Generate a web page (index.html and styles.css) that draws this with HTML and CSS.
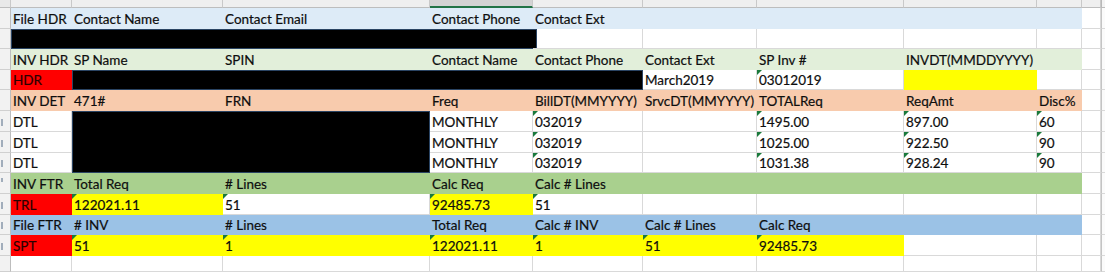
FILE: index.html
```html
<!DOCTYPE html>
<html>
<head>
<meta charset="utf-8">
<link rel="stylesheet" href="styles.css">
</head>
<body>
<div class="sheet">
  <!-- column header strip -->
  <div class="ch corner"></div>
  <div class="ch"></div><div class="ch"></div><div class="ch"></div><div class="ch sel"></div><div class="ch"></div><div class="ch"></div><div class="ch"></div><div class="ch"></div><div class="ch"></div><div class="ch"></div><div class="ch edge"></div>

  <!-- row 9 -->
  <div class="rh"></div>
  <div class="c lb">File HDR</div><div class="c lb">Contact Name</div><div class="c lb">Contact Email</div><div class="c lb">Contact Phone</div><div class="c lb">Contact Ext</div><div class="c lb"></div><div class="c lb"></div><div class="c lb"></div><div class="c lb"></div><div class="c"></div><div class="c edge"></div>

  <!-- row 10 -->
  <div class="rh"></div>
  <div class="c blk span4 wide"></div><div class="c"></div><div class="c"></div><div class="c"></div><div class="c"></div><div class="c"></div><div class="c"></div><div class="c edge"></div>

  <!-- row 11 -->
  <div class="rh"></div>
  <div class="c lg">INV HDR</div><div class="c lg">SP Name</div><div class="c lg">SPIN</div><div class="c lg">Contact Name</div><div class="c lg">Contact Phone</div><div class="c lg">Contact Ext</div><div class="c lg">SP Inv #</div><div class="c lg">INVDT(MMDDYYYY)</div><div class="c lg"></div><div class="c"></div><div class="c edge"></div>

  <!-- row 12 -->
  <div class="rh"></div>
  <div class="c red">HDR</div><div class="c blk span4"></div><div class="c">March2019</div><div class="c tri">03012019</div><div class="c yel"></div><div class="c"></div><div class="c"></div><div class="c edge"></div>

  <!-- row 13 -->
  <div class="rh"></div>
  <div class="c pch">INV DET</div><div class="c pch">471#</div><div class="c pch">FRN</div><div class="c pch">Freq</div><div class="c pch">BillDT(MMYYYY)</div><div class="c pch">SrvcDT(MMYYYY)</div><div class="c pch">TOTALReq</div><div class="c pch">ReqAmt</div><div class="c pch">Disc%</div><div class="c"></div><div class="c edge"></div>

  <!-- row 14 -->
  <div class="rh"><i class="tick"></i></div>
  <div class="c">DTL</div><div class="c blk span2x3"></div><div class="c">MONTHLY</div><div class="c tri">032019</div><div class="c"></div><div class="c tri">1495.00</div><div class="c tri">897.00</div><div class="c tri">60</div><div class="c"></div><div class="c edge"></div>

  <!-- row 15 -->
  <div class="rh"><i class="tick"></i></div>
  <div class="c">DTL</div><div class="c">MONTHLY</div><div class="c tri">032019</div><div class="c"></div><div class="c tri">1025.00</div><div class="c tri">922.50</div><div class="c tri">90</div><div class="c"></div><div class="c edge"></div>

  <!-- row 16 -->
  <div class="rh"><i class="tick"></i></div>
  <div class="c">DTL</div><div class="c">MONTHLY</div><div class="c tri">032019</div><div class="c"></div><div class="c tri">1031.38</div><div class="c tri">928.24</div><div class="c tri">90</div><div class="c"></div><div class="c edge"></div>

  <!-- row 17 -->
  <div class="rh"><i class="tick sm"></i></div>
  <div class="c grn">INV FTR</div><div class="c grn">Total Req</div><div class="c grn"># Lines</div><div class="c grn">Calc Req</div><div class="c grn">Calc # Lines</div><div class="c grn"></div><div class="c grn"></div><div class="c grn"></div><div class="c grn"></div><div class="c"></div><div class="c edge"></div>

  <!-- row 18 -->
  <div class="rh"><i class="tick"></i></div>
  <div class="c red">TRL</div><div class="c yel tri">122021.11</div><div class="c tri">51</div><div class="c yel tri">92485.73</div><div class="c tri">51</div><div class="c"></div><div class="c"></div><div class="c"></div><div class="c"></div><div class="c"></div><div class="c edge"></div>

  <!-- row 19 -->
  <div class="rh"><i class="tick"></i></div>
  <div class="c blu">File FTR</div><div class="c blu"># INV</div><div class="c blu"># Lines</div><div class="c blu">Total Req</div><div class="c blu">Calc # INV</div><div class="c blu">Calc # Lines</div><div class="c blu">Calc Req</div><div class="c blu"></div><div class="c blu"></div><div class="c"></div><div class="c edge"></div>

  <!-- row 20 -->
  <div class="rh"><i class="tick"></i></div>
  <div class="c red">SPT</div><div class="c yel tri">51</div><div class="c yel tri">1</div><div class="c yel tri">122021.11</div><div class="c yel tri">1</div><div class="c yel tri">51</div><div class="c yel tri">92485.73</div><div class="c"></div><div class="c"></div><div class="c"></div><div class="c edge"></div>

  <!-- row 21 -->
  <div class="rh"></div>
  <div class="c"></div><div class="c"></div><div class="c"></div><div class="c"></div><div class="c"></div><div class="c"></div><div class="c"></div><div class="c"></div><div class="c"></div><div class="c"></div><div class="c edge"></div>
</div>
</body>
</html>
```

FILE: styles.css
```css
html, body {
  margin: 0;
  padding: 0;
  background: #ffffff;
  overflow: hidden;
}

.sheet {
  width: 1105px;
  height: 272px;
  display: grid;
  grid-template-columns: 11px 61px 151px 207px 103px 110px 114px 147px 133px 45px 19px 1fr;
  grid-template-rows: 8px 21px 20px 21px 20px 21px 21px 21px 20px 21px 21px 20px 21px 1fr;
  font-family: Lato, "Open Sans", sans-serif;
  font-size: 13.5px;
  color: #0e0e0e;
  -webkit-text-stroke: 0.2px currentColor;
}

.sheet > div {
  box-sizing: border-box;
  min-width: 0;
}

/* column header strip */
.ch {
  background: #efefef;
  border-right: 1px solid #c9c9c9;
  border-bottom: 1px solid #bdbdbd;
}
.ch.corner {
  background: #e9e9e9;
}
.ch.sel {
  background: #d3d3d3;
  border-bottom: 2px solid #217346;
}
.ch.edge {
  background: #f4f4f4;
  border-right: none;
  border-left: 1px solid #b8b8b8;
}

/* row header strip */
.rh {
  background: #f2f2f2;
  border-right: 1px solid #bdbdbd;
  border-bottom: 1px solid #d0d0d0;
  display: flex;
  align-items: center;
  padding-left: 1px;
}
.tick {
  display: block;
  width: 2px;
  height: 7px;
  background: #6a7f96;
  opacity: 0.6;
  margin-top: 2px;
}
.tick.sm {
  height: 4px;
  margin-top: -6px;
}

/* cells */
.c {
  border-right: 1px solid #d9d9d9;
  border-bottom: 1px solid #d9d9d9;
  padding-left: 2px;
  white-space: nowrap;
  display: flex;
  align-items: center;
  padding-top: 1px;
}
.c.edge {
  border-right: none;
  border-left: 1px solid #c4c4c4;
  background: #fbfbfb;
}

.lb  { background: #ddebf7; border-color: #ddebf7; }
.lg  { background: #e2efda; border-color: #e2efda; }
.pch { background: #f8cbad; border-color: #f8cbad; }
.grn { background: #a9d08e; border-color: #a9d08e; }
.blu { background: #9bc2e6; border-color: #9bc2e6; }
.red { background: #ff0000; border-color: #ff0000; color: #2a0000; }
.yel { background: #ffff00; border-color: #ffff00; }

.blk {
  background: #000000;
  border: 1px solid #2a4463;
}
.blk.wide {
  margin-right: -4px;
}
.span4 { grid-column: span 4; }
.span2x3 { grid-column: span 2; grid-row: span 3; }

.tri { position: relative; }
.tri::before {
  content: "";
  position: absolute;
  left: 0;
  top: 0;
  width: 0;
  height: 0;
  border-top: 5px solid #1a7a3c;
  border-right: 5px solid transparent;
}
```
